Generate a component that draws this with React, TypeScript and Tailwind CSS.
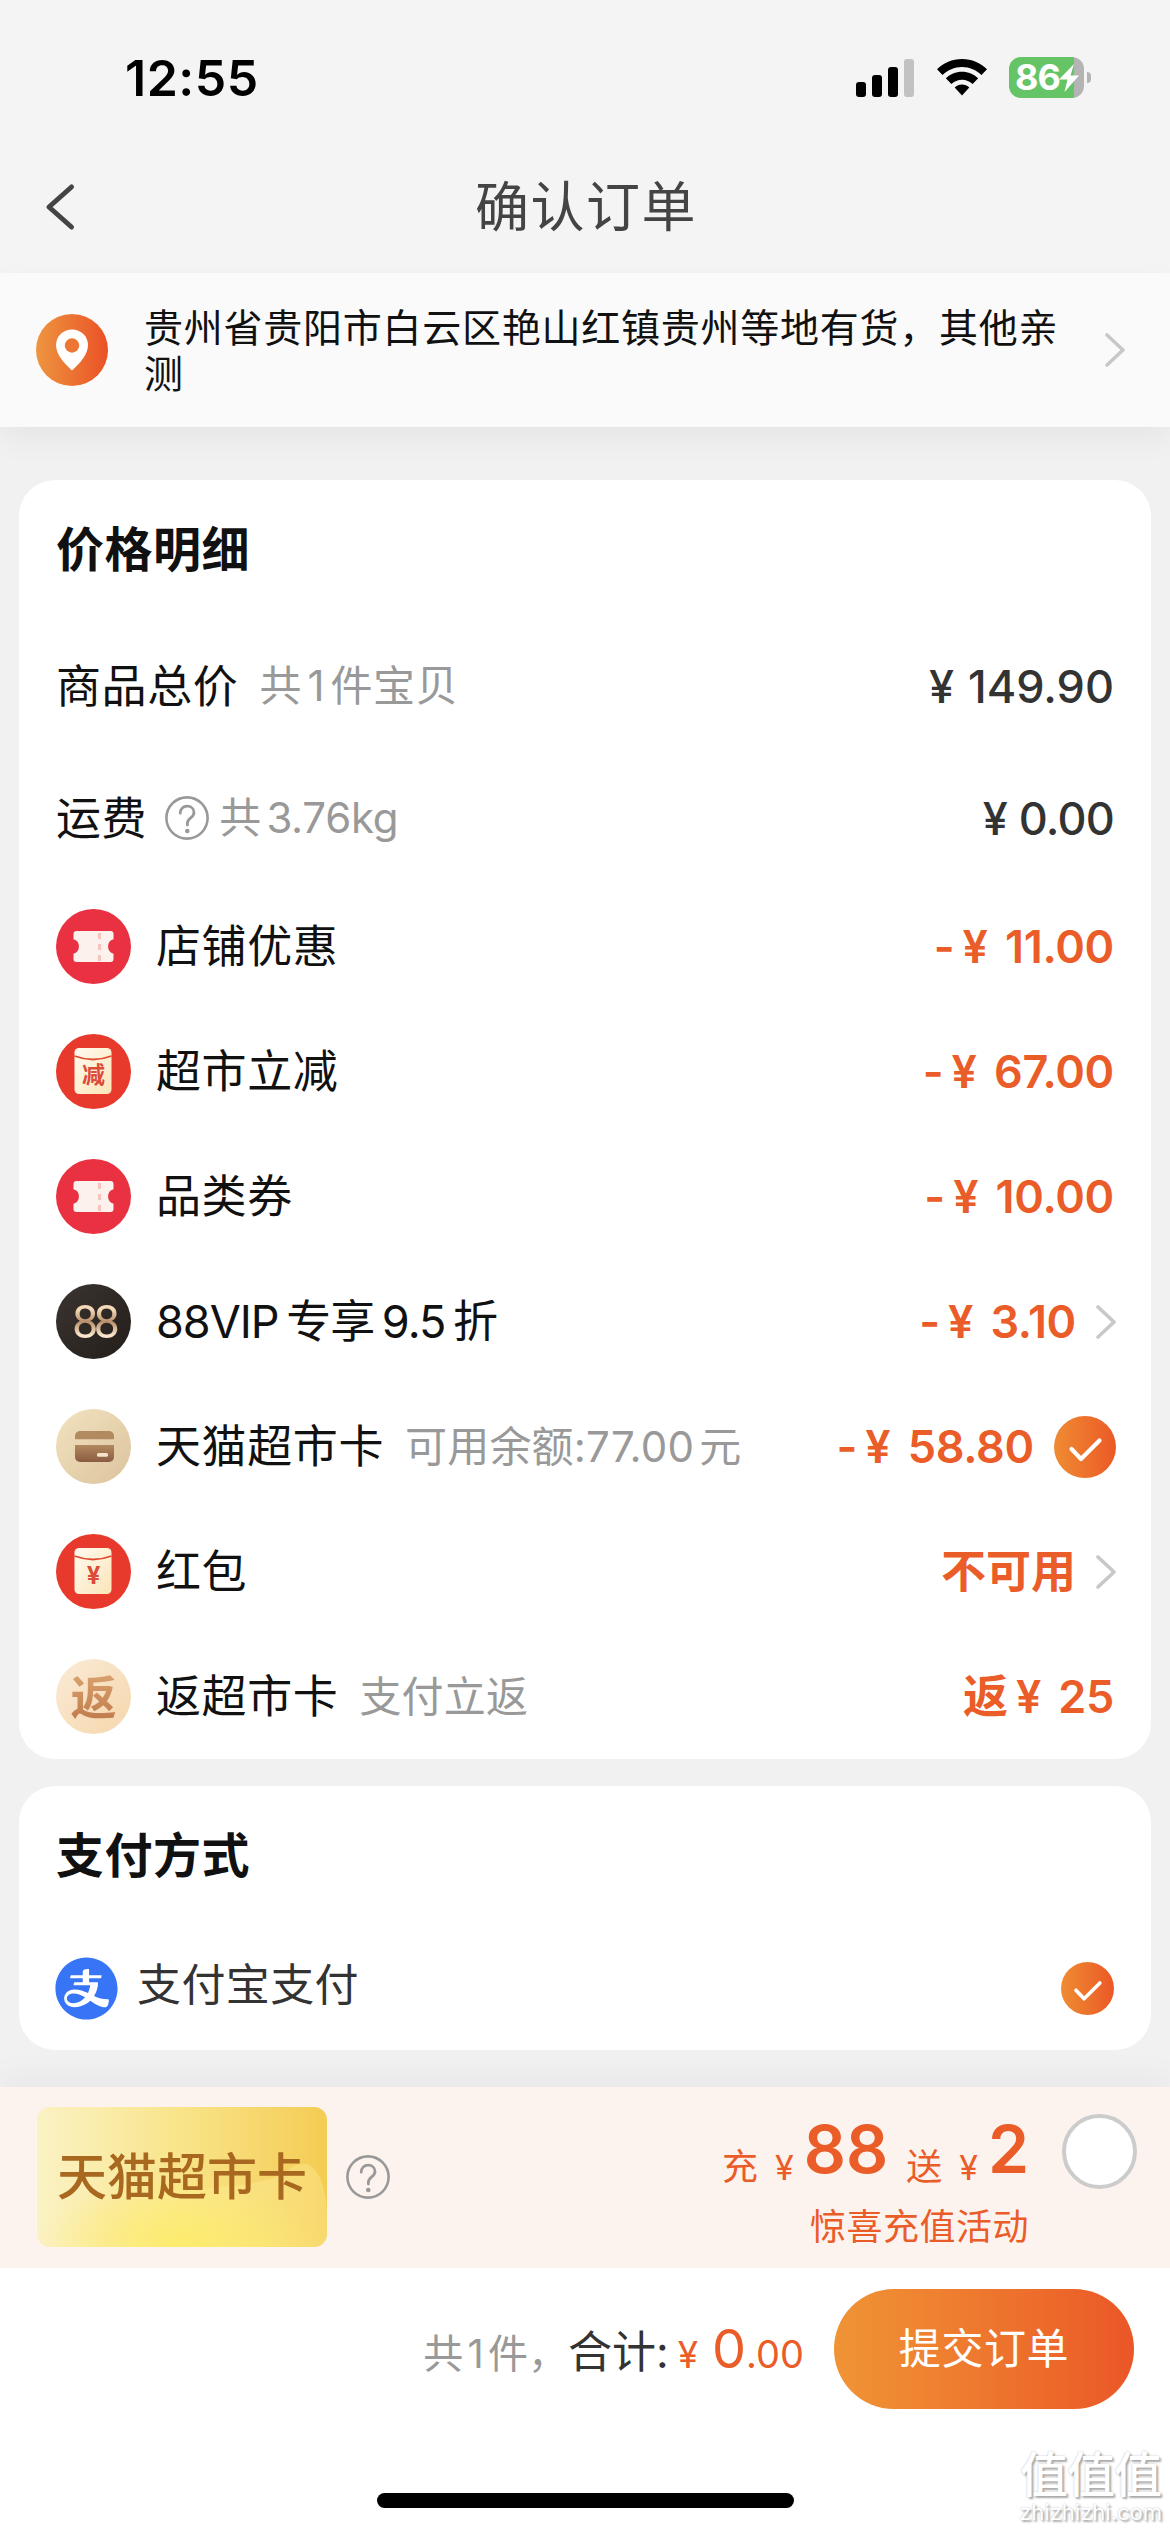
import type { ReactNode } from 'react';
import { AiFillAlipayCircle } from 'react-icons/ai';

type IconKind = 'coupon' | 'cut' | 'vip' | 'card' | 'packet' | 'rebate';

interface Discount {
  id: string;
  icon: IconKind;
  label: string;
  note?: string;
  prefix?: string;
  amount?: string;
  tail?: 'arrow' | 'check';
}

const DISCOUNTS: Discount[] = [
  { id: 'shop', icon: 'coupon', label: '店铺优惠', prefix: '-', amount: '11.00' },
  { id: 'market', icon: 'cut', label: '超市立减', prefix: '-', amount: '67.00' },
  { id: 'category', icon: 'coupon', label: '品类券', prefix: '-', amount: '10.00' },
  { id: 'vip', icon: 'vip', label: '88VIP 专享 9.5 折', prefix: '-', amount: '3.10', tail: 'arrow' },
  { id: 'card', icon: 'card', label: '天猫超市卡', note: '可用余额:77.00 元', prefix: '-', amount: '58.80', tail: 'check' },
  { id: 'packet', icon: 'packet', label: '红包', prefix: '不可用', tail: 'arrow' },
  { id: 'rebate', icon: 'rebate', label: '返超市卡', note: '支付立返', prefix: '返', amount: '25' },
];

function Arrow() {
  return (
    <svg width="21" height="34" viewBox="0 0 21 34" fill="none" className="shrink-0">
      <path d="M2 2l16 15L2 32" stroke="#c8c8c8" strokeWidth="3.6" strokeLinecap="round" strokeLinejoin="round" />
    </svg>
  );
}

function Check({ size }: { size: number }) {
  return (
    <svg width={size} height={size} viewBox="0 0 62 62" fill="none" className="shrink-0">
      <defs>
        <linearGradient id={`check${size}`} x1="0" y1="0" x2="1" y2="0">
          <stop offset="0" stopColor="#ef8c33" />
          <stop offset="1" stopColor="#eb5926" />
        </linearGradient>
      </defs>
      <circle cx="31" cy="31" r="31" fill={`url(#check${size})`} />
      <path d="M17.5 33l9.5 10 18.5-18.5" stroke="#fff" strokeWidth="4.2" strokeLinecap="round" strokeLinejoin="round" />
    </svg>
  );
}

function Help() {
  return (
    <svg width="44" height="44" viewBox="0 0 44 44" fill="none" stroke="#999" className="shrink-0">
      <circle cx="22" cy="22" r="20.6" strokeWidth="2.6" />
      <path
        d="M15.2 17.2c0-4.2 2.9-7 6.9-7s6.9 2.6 6.9 6.3c0 5.2-6.6 5.6-6.6 10.6v2"
        strokeWidth="2.8"
        strokeLinecap="round"
      />
      <circle cx="22.3" cy="35" r="2.3" fill="#999" stroke="none" />
    </svg>
  );
}

function Envelope({ children }: { children: ReactNode }) {
  return (
    <div className="relative flex size-[75px] items-center justify-center rounded-full bg-[#e83a2c]">
      <svg width="75" height="75" viewBox="0 0 75 75" className="absolute inset-0">
        <defs>
          <linearGradient id="paper" x1="0" y1="0" x2="1" y2="1">
            <stop offset="0" stopColor="#fffaf0" />
            <stop offset="1" stopColor="#fbe5b8" />
          </linearGradient>
        </defs>
        <rect x="18.5" y="14" width="37" height="46" rx="4.5" fill="url(#paper)" />
        <path d="M18.5 22q18.500 7 37 0" fill="none" stroke="#e0492f" strokeWidth="1.8" />
      </svg>
      <span className="relative mt-[8px] leading-none font-bold text-[#dc4a38]">{children}</span>
    </div>
  );
}

function RowIcon({ kind }: { kind: IconKind }) {
  switch (kind) {
    case 'coupon':
      return (
        <svg width="75" height="75" viewBox="0 0 75 75">
          <circle cx="37.5" cy="37.5" r="37.5" fill="#ea3142" />
          <path
            d="M20.5 22h34a3 3 0 0 1 3 3v5.300a7.500 7.500 0 0 0 0 14.400V50a3 3 0 0 1-3 3h-34a3 3 0 0 1-3-3v-5.300a7.500 7.500 0 0 0 0-14.400V25a3 3 0 0 1 3-3z"
            fill="#fdf1ee"
          />
          <path d="M43.5 24v29" stroke="#f6c3bf" strokeWidth="3" strokeDasharray="6 5" />
        </svg>
      );
    case 'cut':
      return (
        <Envelope>
          <span className="text-[23px]">减</span>
        </Envelope>
      );
    case 'packet':
      return (
        <Envelope>
          <span className="text-[24px]">¥</span>
        </Envelope>
      );
    case 'vip':
      return (
        <div className="flex size-[75px] items-center justify-center rounded-full bg-linear-to-br from-[#3b3430] to-[#241e1b]">
          <span className="bg-linear-to-b from-[#f3d9b8] from-25% via-[#b98f6b] via-50% to-[#fbe6cb] to-80% bg-clip-text font-['Roboto'] text-[47px] leading-none tracking-[-5px] text-transparent pr-[5px] -mr-[5px]">
            88
          </span>
        </div>
      );
    case 'card':
      return (
        <svg width="75" height="75" viewBox="0 0 75 75">
          <defs>
            <linearGradient id="sand" x1="0" y1="0" x2="1" y2="1">
              <stop offset="0" stopColor="#f2e3bf" />
              <stop offset="1" stopColor="#dcc29e" />
            </linearGradient>
            <linearGradient id="leather" x1="0" y1="0" x2="0" y2="1">
              <stop offset="0" stopColor="#b18a5f" />
              <stop offset="1" stopColor="#8b5b41" />
            </linearGradient>
          </defs>
          <circle cx="37.5" cy="37.5" r="37.5" fill="url(#sand)" />
          <path d="M19 30.300v-3.300a5 5 0 0 1 5-5h29a5 5 0 0 1 5 5v3.300z" fill="#b18a5f" />
          <path d="M19 36h39v12a5 5 0 0 1-5 5H24a5 5 0 0 1-5-5z" fill="url(#leather)" />
          <rect x="41" y="44" width="11" height="3.8" rx="1.5" fill="#f5e3cb" />
        </svg>
      );
    case 'rebate':
      return (
        <div className="flex size-[75px] items-center justify-center rounded-full bg-linear-to-br from-[#faebd7] to-[#f5d6ab]">
          <span className="bg-linear-to-b from-[#dca873] to-[#bd7548] bg-clip-text text-[46px] leading-[60px] font-bold text-transparent">
            返
          </span>
        </div>
      );
  }
}

function DiscountRow({ item }: { item: Discount }) {
  return (
    <div className="flex h-[125px] items-center">
      <div className="size-[75px] shrink-0">
        <RowIcon kind={item.icon} />
      </div>
      <span
        className={
          item.icon === 'vip'
            ? 'ml-[25px] text-[45px] tracking-[-1px] text-[#111] [word-spacing:-4px]'
            : 'ml-[25px] text-[45px] tracking-[0.6px] text-[#111]'
        }
      >
        {item.label}
      </span>
      {item.note && (
        <span className="ml-[21px] text-[42px] tracking-[0.2px] text-[#999] [word-spacing:-7px]">{item.note}</span>
      )}
      <div className="ml-auto flex items-center font-semibold text-[#ea5c28]">
        {item.prefix && <span className="text-[45px]">{item.prefix}</span>}
        {item.amount && (
          <>
            <span className={item.prefix === '-' ? 'ml-[8px] text-[45px]' : 'ml-[8px] text-[45px]'}>¥</span>
            <span className="ml-[17px] text-[45px] tracking-[-0.3px]">{item.amount}</span>
          </>
        )}
        {item.tail === 'arrow' && (
          <span className="-mr-[3px] ml-[20px]">
            <Arrow />
          </span>
        )}
        {item.tail === 'check' && (
          <span className="-mr-[2px] ml-[20px]">
            <Check size={62} />
          </span>
        )}
      </div>
    </div>
  );
}

function Battery() {
  return (
    <div className="ml-[22px] flex items-center gap-[3px]">
      <div className="flex h-[41px] w-[75px] items-center rounded-[12px] bg-linear-to-r from-[#65c466] from-87% to-[#b4b4b4] to-87% pl-[6px]">
        <span className="text-[36px] leading-[41px] font-bold tracking-[-1px] text-white">86</span>
        <svg width="20" height="28" viewBox="0 0 20 28" className="-ml-px">
          <path d="M15 0L0 15.500h8.500L5.500 28 20 11.500h-8.500z" fill="#fff" />
        </svg>
      </div>
      <span className="h-[11px] w-[4px] rounded-r-full bg-[#b4b4b4]" />
    </div>
  );
}

function StatusBar() {
  return (
    <div className="flex h-[155px] items-center justify-between pr-[79px] pl-[125px]">
      <span className="text-[50px] font-semibold tracking-[0.5px] text-black">12:55</span>
      <div className="flex items-center">
        <svg width="58" height="38" viewBox="0 0 58 38">
          <rect x="0" y="23" width="10" height="15" rx="3" />
          <rect x="16" y="16" width="10" height="22" rx="3" />
          <rect x="32" y="8" width="10" height="30" rx="3" />
          <rect x="48" y="0" width="10" height="38" rx="3" fill="#c2c2c2" />
        </svg>
        <svg width="50" height="37" viewBox="0 0 50 37" className="ml-[23px]">
          <path d="M25 0C34.800 0 43.500 3.900 50 10.200L44.500 16C39.400 11 32.600 8 25 8S10.600 11 5.500 16L0 10.200C6.500 3.900 15.200 0 25 0z" />
          <path d="M25 12.700c6.300 0 12 2.500 16.200 6.600L35.600 25c-2.800-2.600-6.500-4.300-10.600-4.300S17.200 22.400 14.400 25l-5.600-5.700C13 15.200 18.700 12.700 25 12.700z" />
          <path d="M25 25.500c2.800 0 5.400 1.100 7.300 2.900L25 36.500l-7.300-8.100c1.900-1.800 4.500-2.900 7.300-2.900z" />
        </svg>
        <Battery />
      </div>
    </div>
  );
}

export default function App() {
  return (
    <div className="relative flex h-[2532px] w-[1170px] flex-col overflow-hidden bg-[#f1f1f1] font-['Inter','Noto_Sans_CJK_SC',sans-serif] leading-none whitespace-nowrap">
      <header className="h-[273px] shrink-0 bg-[#f4f4f4]">
        <StatusBar />
        <div className="flex h-[104px] items-center pl-[44px]">
          <svg width="32" height="48" viewBox="0 0 32 48" fill="none">
            <path d="M27.5 4L5 24l22.500 20" stroke="#444" strokeWidth="5" strokeLinecap="round" strokeLinejoin="round" />
          </svg>
          <h1 className="mt-[2px] flex-1 pr-[74px] text-center text-[54px] tracking-[1.5px] text-[#444]">确认订单</h1>
        </div>
      </header>

      <section className="flex h-[154px] shrink-0 items-center bg-[#fafafa] pr-[44px] pl-[36px] shadow-[0_12px_30px_rgba(0,0,0,0.05)]">
        <svg width="72" height="72" viewBox="0 0 72 72" className="shrink-0">
          <defs>
            <linearGradient id="pin" x1="0" y1="0" x2="1" y2="0">
              <stop offset="0" stopColor="#ee9540" />
              <stop offset="1" stopColor="#ea5126" />
            </linearGradient>
          </defs>
          <circle cx="36" cy="36" r="36" fill="url(#pin)" />
          <path d="M36 15.500c9 0 16 7 16 15.500 0 9-7.500 18-16 25.500C27.500 49 20 40 20 31c0-8.500 7-15.500 16-15.500z" fill="#fff" />
          <circle cx="36" cy="31.5" r="7.2" fill="#ec7633" />
        </svg>
        <p className="mt-px ml-[36px] w-[925px] text-[39px] leading-[46px] tracking-[0.75px] whitespace-normal text-[#111]">
          贵州省贵阳市白云区艳山红镇贵州等地有货，其他亲测
        </p>
        <span className="ml-auto">
          <Arrow />
        </span>
      </section>

      <section className="mx-[19px] mt-[53px] h-[1279px] shrink-0 rounded-[36px] bg-white px-[37px]">
        <h2 className="flex h-[140px] items-center text-[48px] font-bold tracking-[0.5px] text-[#111]">价格明细</h2>
        <div className="flex h-[132px] items-center">
          <span className="text-[45px] tracking-[0.6px] text-[#111]">商品总价</span>
          <span className="ml-[21px] text-[42px] tracking-[0.6px] text-[#999] [word-spacing:-7px]">共 1 件宝贝</span>
          <span className="ml-auto text-[45px] font-medium text-[#333]">¥</span>
          <span className="ml-[14px] text-[45px] font-medium text-[#333]">149.90</span>
        </div>
        <div className="flex h-[132px] items-center">
          <span className="mr-[18px] text-[45px] tracking-[0.6px] text-[#111]">运费</span>
          <Help />
          <span className="ml-[10px] text-[42px] tracking-[-0.3px] text-[#999] [word-spacing:-6px]">共 3.76kg</span>
          <span className="ml-auto text-[45px] font-medium text-[#333]">¥</span>
          <span className="ml-[11px] text-[45px] font-medium tracking-[-0.8px] text-[#333]">0.00</span>
        </div>
        {DISCOUNTS.map((d) => (
          <DiscountRow key={d.id} item={d} />
        ))}
      </section>

      <section className="mx-[19px] mt-[27px] h-[264px] shrink-0 rounded-[36px] bg-white px-[37px]">
        <h2 className="flex h-[140px] items-center text-[48px] font-bold tracking-[0.5px] text-[#111]">支付方式</h2>
        <div className="flex h-[124px] items-center">
          <AiFillAlipayCircle className="-ml-[5px] size-[71px] text-[#3875f6]" />
          <span className="mb-[7px] ml-[15px] text-[44px] tracking-[0.4px] text-[#333]">支付宝支付</span>
          <span className="ml-auto">
            <Check size={53} />
          </span>
        </div>
      </section>

      <footer className="mt-[37px] flex flex-1 flex-col bg-white shadow-[0_-12px_30px_rgba(0,0,0,0.04)]">
        <div className="flex h-[181px] bg-[#fcf3ee] pr-[33px] pl-[37px]">
          <div className="relative mt-[20px] flex h-[140px] w-[290px] items-center justify-center overflow-hidden rounded-[13px] bg-linear-to-r from-[#fbf2c4] via-[#f9e488] to-[#f4cc52]">
            <svg width="290" height="140" viewBox="0 0 290 140" className="absolute inset-0">
              <defs>
                <radialGradient id="glow" cx="0.5" cy="1" r="0.5">
                  <stop offset="0" stopColor="#fdec68" stopOpacity="0.9" />
                  <stop offset="1" stopColor="#fdec68" stopOpacity="0" />
                </radialGradient>
              </defs>
              <path d="M86 140V92C150 76 230 86 255 60c25-14 35 20 35 50v30z" fill="#fff0a0" fillOpacity="0.35" />
              <rect width="290" height="140" fill="url(#glow)" />
            </svg>
            <span className="relative text-[50px] font-medium text-[#a8681f]">天猫超市卡</span>
          </div>
          <div className="mt-[68px] ml-[19px]">
            <Help />
          </div>
          <div className="ml-auto flex flex-col items-end text-[#ea5c28]">
            <div className="mt-[29px] flex h-[80px] items-baseline text-[36px]">
              <span>充</span>
              <span className="ml-[17px] text-[34px]">¥</span>
              <span className="relative -top-[7px] ml-[10px] text-[66px] leading-[80px] font-semibold">88</span>
              <span className="ml-[18px]">送</span>
              <span className="ml-[17px] text-[34px]">¥</span>
              <span className="relative -top-[7px] ml-[10px] text-[66px] leading-[80px] font-semibold">2</span>
            </div>
            <span className="mt-[13px] text-[36px] tracking-[0.5px]">惊喜充值活动</span>
          </div>
          <span className="mt-[27px] ml-[33px] size-[75px] rounded-full border-4 border-[#ccc] bg-white" />
        </div>

        <div className="mt-[21px] flex h-[120px] items-center justify-end pr-[36px]">
          <div className="flex items-baseline">
            <span className="text-[40px] text-[#999] [word-spacing:-7px]">共 1 件，</span>
            <span className="text-[44px] text-[#333]">合计:</span>
            <span className="ml-[9px] text-[37px] text-[#ea5c28]">¥</span>
            <span className="ml-[14px] text-[54px] text-[#ea5c28]">0</span>
            <span className="text-[38px] text-[#ea5c28]">.00</span>
          </div>
          <button
            type="button"
            className="ml-[30px] h-[120px] w-[300px] rounded-full bg-linear-to-r from-[#ef9435] to-[#eb5627] text-[42px] tracking-[0.6px] text-white"
          >
            提交订单
          </button>
        </div>
        <div className="mt-[84px] ml-[377px] h-[15px] w-[417px] rounded-full bg-black" />
      </footer>

      {/* site stamp over the bottom right corner */}
      <div className="absolute right-[8px] bottom-[8px] flex flex-col items-center text-white [text-shadow:2px_2px_2px_#aaa,0_0_2px_#bbb]">
        <span className="text-[48px] leading-[50px] font-medium tracking-[-1px]">值值值</span>
        <span className="text-[22px] leading-[24px]">zhizhizhi.com</span>
      </div>
    </div>
  );
}
